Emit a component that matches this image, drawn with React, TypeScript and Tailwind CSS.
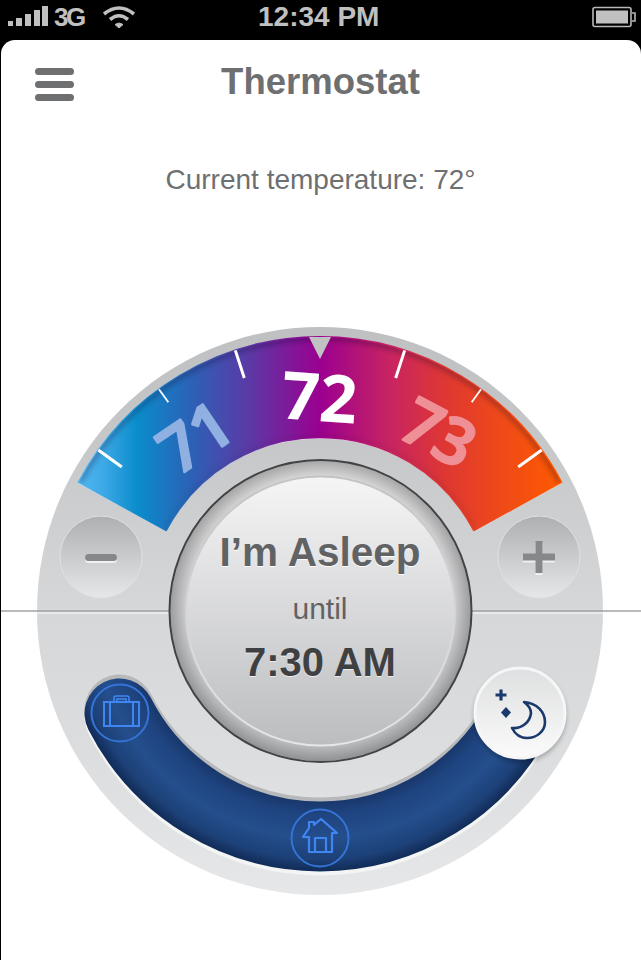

const band = "M79 482A273 273 0 0 1 561 482L474 530A174 174 0 0 0 166 530Z";
const lower = "M119.5 713.5A225 225 0 0 0 520.5 713.5";

function tick(angle: number, major: boolean) {
  const a = (angle * Math.PI) / 180;
  const r2 = major ? 245 : 258;
  return (
    <line
      key={angle}
      x1={320 + 274 * Math.sin(a)}
      y1={611 - 274 * Math.cos(a)}
      x2={320 + r2 * Math.sin(a)}
      y2={611 - r2 * Math.cos(a)}
      stroke="#ffffff"
      strokeWidth={major ? 3 : 1.8}
    />
  );
}

function Dial() {
  return (
    <svg viewBox="0 320 641 640" className="absolute inset-0 w-full h-full">
      <defs>
        <linearGradient id="disc" x1="0" y1="0" x2="0" y2="1">
          <stop offset="0" stopColor="#bfc0c2" />
          <stop offset="0.2" stopColor="#c6c7c9" />
          <stop offset="0.4" stopColor="#d1d2d4" />
          <stop offset="0.5" stopColor="#d6d7d9" />
          <stop offset="0.75" stopColor="#dcddde" />
          <stop offset="1" stopColor="#e6e7e8" />
        </linearGradient>
        <linearGradient id="heat" gradientUnits="userSpaceOnUse" x1="80" y1="0" x2="560" y2="0">
          <stop offset="0" stopColor="#52b8f2" />
          <stop offset="0.05" stopColor="#3ca8e6" />
          <stop offset="0.12" stopColor="#0a8ccb" />
          <stop offset="0.23" stopColor="#2b62b6" />
          <stop offset="0.35" stopColor="#5a3aa6" />
          <stop offset="0.5" stopColor="#9b0090" />
          <stop offset="0.65" stopColor="#c92560" />
          <stop offset="0.76" stopColor="#de3733" />
          <stop offset="0.88" stopColor="#ef4a18" />
          <stop offset="1" stopColor="#ff5a00" />
        </linearGradient>
        <radialGradient id="blue" gradientUnits="userSpaceOnUse" cx="320" cy="611" r="261">
          <stop offset="0.72" stopColor="#173568" />
          <stop offset="0.78" stopColor="#1f4480" />
          <stop offset="0.87" stopColor="#244e8c" />
          <stop offset="0.95" stopColor="#1d4178" />
          <stop offset="1" stopColor="#102a55" />
        </radialGradient>
        <linearGradient id="btn" x1="0" y1="0" x2="0" y2="1">
          <stop offset="0" stopColor="#aeafb1" />
          <stop offset="1" stopColor="#e6e7e8" />
        </linearGradient>
        <linearGradient id="collar" x1="0" y1="0" x2="0" y2="1">
          <stop offset="0" stopColor="#d8d8d9" />
          <stop offset="1" stopColor="#b9babc" />
        </linearGradient>
        <radialGradient id="collarEdge" cx="0.5" cy="0.5" r="0.5">
          <stop offset="0.9" stopColor="#000" stopOpacity="0" />
          <stop offset="1" stopColor="#000" stopOpacity="0.22" />
        </radialGradient>
        <linearGradient id="face" x1="0" y1="0" x2="0" y2="1">
          <stop offset="0" stopColor="#f5f5f6" />
          <stop offset="1" stopColor="#bcbdbf" />
        </linearGradient>
        <linearGradient id="faceEdge" x1="0" y1="0" x2="0" y2="1">
          <stop offset="0" stopColor="#c2c3c5" />
          <stop offset="1" stopColor="#e6e6e7" />
        </linearGradient>
        <linearGradient id="moonBtn" x1="0" y1="0" x2="0" y2="1">
          <stop offset="0" stopColor="#dedfe0" />
          <stop offset="1" stopColor="#fbfbfb" />
        </linearGradient>
        <clipPath id="bandClip">
          <path d={band} />
        </clipPath>
        <filter id="blur3" x="-10%" y="-10%" width="120%" height="120%">
          <feGaussianBlur stdDeviation="3" />
        </filter>
        <filter id="blur2" x="-30%" y="-30%" width="160%" height="160%">
          <feGaussianBlur stdDeviation="2.5" />
        </filter>
      </defs>

      <ellipse cx="320" cy="611" rx="283" ry="284" fill="url(#disc)" />
      <path d="M37 611H169M472 611H603" stroke="#e9e9ea" strokeWidth="2" transform="translate(0 2)" />
      <path d="M0 611H169M472 611H641" stroke="#a3a4a6" strokeWidth="1.5" />

      <circle cx="101" cy="557" r="41" fill="url(#btn)" stroke="#dfe0e1" strokeWidth="1" />
      <circle cx="539" cy="557" r="41" fill="url(#btn)" stroke="#dfe0e1" strokeWidth="1" />
      <rect x="85" y="555" width="32" height="8" rx="3.5" fill="#f0f0f1" />
      <rect x="85" y="554" width="32" height="7" rx="3.5" fill="#87888a" />
      <path d="M523 558H555M539 542V574" stroke="#f0f0f1" strokeWidth="7" transform="translate(0 1)" />
      <path d="M523 557H555M539 541V573" stroke="#87888a" strokeWidth="7" />

      <path d={lower} fill="none" stroke="#f3f4f4" strokeWidth="70" strokeLinecap="round" transform="translate(0 4)" />
      <path d={lower} fill="none" stroke="#b7b8ba" strokeWidth="70" strokeLinecap="round" transform="translate(0 -4)" />
      <path d={lower} fill="none" stroke="url(#blue)" strokeWidth="70" strokeLinecap="round" />

      <circle cx="120" cy="713" r="28.5" fill="none" stroke="#3574d6" strokeWidth="2" />
      <g fill="none" stroke="#3f86f2" strokeWidth="2">
        <rect x="104" y="702" width="35" height="24" />
        <path d="M110 702V726M133 702V726" />
        <path d="M114 702V698Q114 696 116 696H127Q129 696 129 698V702M117 702V699H126V702" strokeWidth="1.6" />
      </g>

      <circle cx="320" cy="838" r="28.5" fill="none" stroke="#3574d6" strokeWidth="2" />
      <g fill="none" stroke="#3f86f2" strokeWidth="2.2" strokeLinejoin="round">
        <path d="M309 828V822H314V825L321 819L337 833H332V852H309V837H303Z" />
        <path d="M315 852V838H326V852" />
      </g>

      <path d={band} fill="#ffffff" fillOpacity="0.75" transform="translate(0 1.5)" />
      <path d={band} fill="url(#heat)" stroke="url(#heat)" strokeWidth="2.5" strokeLinejoin="round" />
      <g clipPath="url(#bandClip)">
        <path d="M79 482A273 273 0 0 1 561 482" fill="none" stroke="#1a0f2a" strokeOpacity="0.4" strokeWidth="5" filter="url(#blur3)" />
        <path d="M474 530A174 174 0 0 0 166 530" fill="none" stroke="#1a0f2a" strokeOpacity="0.14" strokeWidth="3" filter="url(#blur3)" />
      </g>

      {[-54, -18, 18, 54].map((a) => tick(a, true))}
      {[-36, 36].map((a) => tick(a, false))}

      <path d="M309 337H331L320 359Z" fill="#c0c1c3" />

      <g fontFamily="'Open Sans', sans-serif" fontWeight={600} textAnchor="middle">
        <text x="0" y="0" fontSize="64" fill="#90b0e2" stroke="#90b0e2" strokeWidth="2.5" strokeLinejoin="round" transform="translate(208 456) rotate(-34)">
          71
        </text>
        <text x="0" y="0" fontSize="66" fontWeight={700} fill="#ffffff" transform="translate(318 421) rotate(4)">
          72
        </text>
        <text x="0" y="0" fontSize="64" fill="#ee9096" stroke="#ee9096" strokeWidth="2.5" strokeLinejoin="round" transform="translate(428 453) rotate(28)">
          73
        </text>
      </g>

      <circle cx="320.5" cy="612" r="151" fill="#ffffff" fillOpacity="0.5" />
      <circle cx="320.5" cy="611" r="151" fill="url(#collar)" stroke="#424345" strokeWidth="2" />
      <circle cx="320.5" cy="611" r="150" fill="url(#collarEdge)" />
      <circle cx="320.5" cy="611" r="134.5" fill="url(#face)" stroke="url(#faceEdge)" strokeWidth="2" />

      <circle cx="520" cy="716" r="46" fill="#000" fillOpacity="0.3" filter="url(#blur2)" />
      <circle cx="520" cy="713" r="45" fill="url(#moonBtn)" stroke="#f6f6f6" strokeWidth="3" />
      <path
        d="M524 702C537 703 545 712 545 722C545 731 537 738 527 738C520 738 515 734 512 728C522 729 530 722 531 713C531 709 528 705 524 702Z"
        fill="none"
        stroke="#1b3a6b"
        strokeWidth="2.6"
        strokeLinejoin="round"
      />
      <path d="M501 689.5V700.5M495.5 695H506.5" stroke="#1b3a6b" strokeWidth="3.2" />
      <path d="M506 707L511 712.5L506 718L501 712.5Z" fill="#1b3a6b" />
    </svg>
  );
}

function Signal() {
  return (
    <svg width="40" height="20" viewBox="0 0 40 20" fill="#c0c0c0">
      <rect x="0" y="15" width="5" height="5" />
      <rect x="8" y="12" width="6" height="8" />
      <rect x="17" y="8" width="6" height="12" />
      <rect x="26" y="4" width="6" height="16" />
      <rect x="34" y="0" width="6" height="20" />
    </svg>
  );
}

function Wifi() {
  return (
    <svg width="34" height="24" viewBox="0 0 34 24" fill="none" stroke="#c0c0c0" strokeWidth="3.6">
      <path d="M2 9Q17 -3 32 9" />
      <path d="M8 14.5Q17 7 26 14.5" />
      <path d="M13 19.5Q17 16.5 21 19.5L17 23Z" fill="#c0c0c0" strokeWidth="1" />
    </svg>
  );
}

function Battery() {
  return (
    <svg width="45" height="22" viewBox="0 0 45 22">
      <rect x="1" y="1.5" width="38" height="19" rx="2" fill="none" stroke="#b8b8b8" strokeWidth="1.6" />
      <rect x="4" y="4.5" width="32" height="13" fill="#c0c0c0" />
      <path d="M40 7H43V15H40" fill="none" stroke="#b8b8b8" strokeWidth="1.6" />
    </svg>
  );
}

export default function App() {
  return (
    <div className="w-[641px] h-[960px] bg-black flex flex-col overflow-hidden font-['Liberation_Sans',sans-serif]">
      <div className="h-10 flex items-start justify-between pl-2 pr-1 pt-[6px] shrink-0 relative text-[#c0c0c0]">
        <div className="flex items-start">
          <Signal />
          <span className="ml-[6px] mt-px text-[26px] font-bold tracking-[-2.5px] leading-[20px]">3G</span>
          <span className="ml-[18px] -mt-px">
            <Wifi />
          </span>
        </div>
        <span className="absolute left-[258px] top-[1px] text-[28px] font-bold leading-[32px]">12:34 PM</span>
        <Battery />
      </div>

      <div className="flex-1 bg-white rounded-t-[14px] ml-px flex flex-col overflow-hidden">
        <div className="relative h-[84px] flex items-center justify-center shrink-0">
          <div className="absolute left-[34px] top-[28px] w-[39px] flex flex-col gap-[6px]">
            <div className="h-[7px] rounded-full bg-[#6e6f71]" />
            <div className="h-[7px] rounded-full bg-[#6e6f71]" />
            <div className="h-[7px] rounded-full bg-[#6e6f71]" />
          </div>
          <h1 className="text-[36.5px] font-bold text-[#6e6f71] leading-none -ml-px">Thermostat</h1>
        </div>
        <p className="mt-[38px] text-center text-[28px] leading-[36px] text-[#6e6f71] -ml-px">Current temperature: 72°</p>
        <div className="relative mt-auto -ml-px h-[640px] shrink-0">
          <Dial />
          <div className="absolute left-[170px] top-[209px] w-[300px] flex flex-col items-center text-[#616264]">
            <span className="text-[40.5px] font-bold leading-[46px] [text-shadow:0_1px_0_#ffffff]">I’m Asleep</span>
            <span className="mt-[18px] text-[30px] leading-[32px]">until</span>
            <span className="mt-[14px] text-[40px] font-bold leading-[46px] text-[#3f4042] [text-shadow:0_1px_0_#ececec]">7:30 AM</span>
          </div>
        </div>
      </div>
    </div>
  );
}
